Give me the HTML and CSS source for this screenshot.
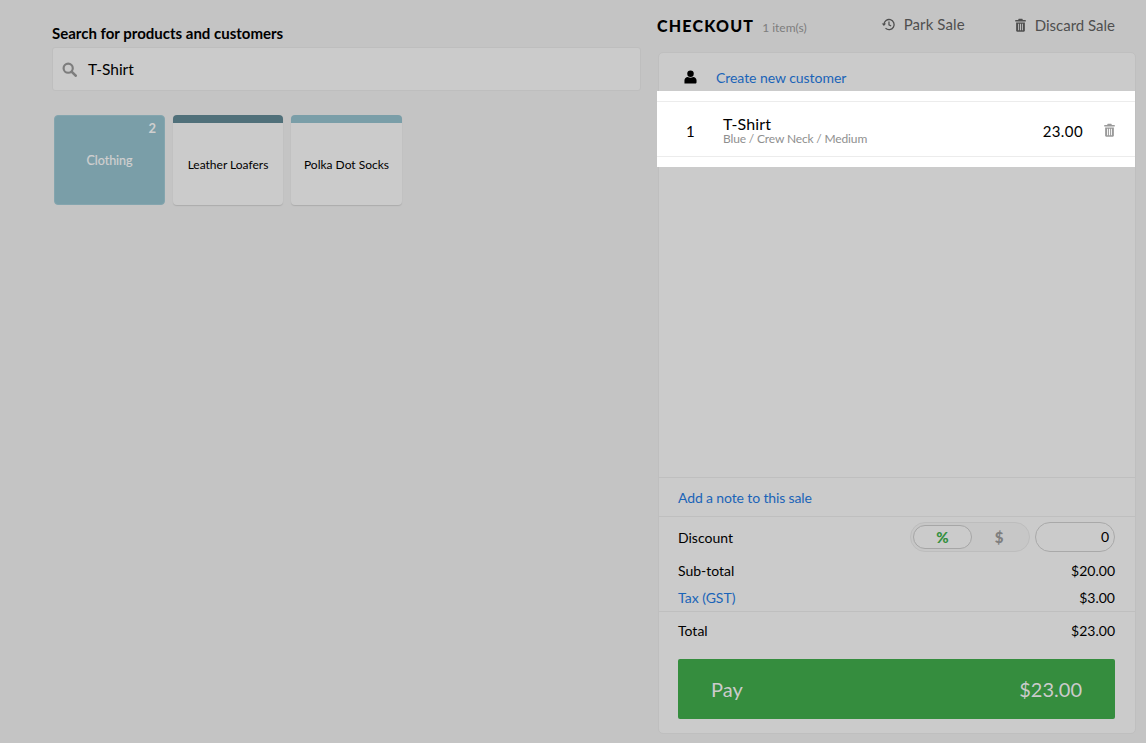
FILE: index.html
```html
<!DOCTYPE html>
<html lang="en">
<head>
<meta charset="utf-8">
<title>Checkout</title>
<link rel="stylesheet" href="styles.css">
</head>
<body>
<div class="page">
  <main class="left">
    <h2 class="search-label">Search for products and customers</h2>
    <div class="search-box">
      <svg class="search-icon" viewBox="0 0 16 16" width="15" height="15"><circle cx="6.600" cy="6.600" r="4.900" fill="none" stroke="#7d7d7d" stroke-width="2.300"/><path d="M10.200 10.200L14.600 14.600" stroke="#7d7d7d" stroke-width="2.800" stroke-linecap="round"/></svg>
      <span class="search-text">T-Shirt</span>
    </div>
    <div class="tiles">
      <div class="tile tile-cat"><span class="tile-count">2</span><span class="tile-cat-name">Clothing</span></div>
      <div class="tile tile-product tile-dark"><span class="tile-name">Leather Loafers</span></div>
      <div class="tile tile-product tile-light"><span class="tile-name">Polka Dot Socks</span></div>
    </div>
  </main>
  <section class="right">
    <header class="head">
      <h1 class="title">CHECKOUT</h1>
      <span class="count">1 item(s)</span>
      <span class="action action-park">
        <svg viewBox="0 0 16 16" width="15" height="15"><path d="M3.200 8a5.400 5.400 0 1 1 1.600 3.900" fill="none" stroke="#4f4f4f" stroke-width="1.400"/><path d="M0.800 6.900h4.600L3.100 9.600z" fill="#4f4f4f"/><path d="M8.500 4.900v3.400l2.300 1.300" fill="none" stroke="#4f4f4f" stroke-width="1.300"/></svg>
        Park Sale
      </span>
      <span class="action action-discard">
        <svg viewBox="0 0 14 16" width="13" height="14"><path d="M5 0.800h4l.8 1.600H13v1.600H1V2.400h3.200zM2 5h10v9.400c0 .8-.5 1.300-1.200 1.300H3.200c-.7 0-1.200-.5-1.200-1.300zM4.300 6.500v7.500h1.100V6.500zM6.450 6.500v7.500h1.100V6.500zM8.600 6.500v7.500h1.100V6.500z" fill="#4f4f4f" fill-rule="evenodd"/></svg>
        Discard Sale
      </span>
    </header>
    <div class="panel">
      <div class="customer">
        <svg class="person" viewBox="0 0 14 14" width="13" height="14"><circle cx="7" cy="3.500" r="3.500" fill="#000"/><path d="M0.500 14V10.500C0.500 8.300 2.300 7.200 4 6.900C5.800 8 8.200 8 10 6.900C11.700 7.200 13.500 8.300 13.500 10.500V12.600C13.500 13.500 13 14 12 14z" fill="#000"/></svg>
        <a class="link customer-link">Create new customer</a>
      </div>
      <div class="cart">
        <div class="line">
          <span class="qty">1</span>
          <div class="item">
            <div class="item-name">T-Shirt</div>
            <div class="item-variant">Blue / Crew Neck / Medium</div>
          </div>
          <span class="price">23.00</span>
          <svg class="remove" viewBox="0 0 14 16" width="13" height="14"><path d="M5 0.800h4l.8 1.600H13v1.600H1V2.400h3.200zM2 5h10v9.400c0 .8-.5 1.300-1.200 1.300H3.200c-.7 0-1.200-.5-1.200-1.300zM4.300 6.500v7.500h1.100V6.500zM6.450 6.500v7.500h1.100V6.500zM8.600 6.500v7.500h1.100V6.500z" fill="#9a9a9a" fill-rule="evenodd"/></svg>
        </div>
      </div>
      <div class="spacer"></div>
      <div class="note"><a class="link note-link">Add a note to this sale</a></div>
      <div class="summary">
        <div class="row row-discount">
          <span>Discount</span>
          <div class="discount-controls">
            <div class="toggle">
              <span class="toggle-on">%</span>
              <span class="toggle-off">$</span>
            </div>
            <div class="discount-input">0</div>
          </div>
        </div>
        <div class="row row-sub"><span>Sub-total</span><span>$20.00</span></div>
        <div class="row row-tax"><a class="link">Tax (GST)</a><span>$3.00</span></div>
      </div>
      <div class="total">
        <div class="row"><span>Total</span><span>$23.00</span></div>
        <div class="pay"><span>Pay</span><span>$23.00</span></div>
      </div>
    </div>
  </section>
</div>
</body>
</html>
```
FILE: styles.css
```css
* { box-sizing: border-box; }
html, body { margin: 0; height: 100%; }
body {
  background: #c4c4c4;
  font-family: Lato, "Open Sans", sans-serif;
  color: #000;
  overflow: hidden;
}
.page {
  display: flex;
  height: 743px;
  padding-left: 52px;
}
.left { width: 589px; padding-top: 25px; }
.search-label {
  margin: 0;
  font-size: 15px;
  line-height: 17px;
  font-weight: 700;
}
.search-box {
  margin-top: 5px;
  height: 44px;
  display: flex;
  align-items: center;
  padding-left: 9px;
  background: #cbcbcb;
  border: 1px solid #bebebe;
  border-radius: 3px;
}
.search-text { margin-left: 11px; font-size: 15.500px; }
.tiles {
  display: flex;
  gap: 8px;
  margin-top: 24px;
  padding-left: 2px;
}
.tile {
  width: 111px;
  height: 90px;
  border-radius: 4px;
  font-size: 12px;
}
.tile-cat {
  position: relative;
  background: #7a9ea8;
  color: #cfcfcf;
  display: flex;
  align-items: center;
  justify-content: center;
  border: 1px solid #84a5ae;
  font-size: 12.500px;
}
.tile-cat-name { font-weight: 400; -webkit-text-stroke: 0.2px #cfcfcf; }
.tile-count {
  position: absolute;
  top: 4px;
  right: 8px;
  font-weight: 700;
  font-size: 13px;
}
.tile-product {
  background: #cbcbcb;
  border-top: 8px solid;
  box-shadow: 0 1px 1px #acacac;
  display: flex;
  align-items: center;
  justify-content: center;
}
.tile-dark { border-top-color: #50707a; width: 110px; }
.tile-light { border-top-color: #7a9ea8; }
.right { width: 478px; margin-left: 16px; }
.head {
  height: 52px;
  display: flex;
  align-items: baseline;
  padding-top: 15px;
}
.title {
  margin: 0;
  font-size: 16px;
  font-weight: 900;
  letter-spacing: 1.2px;
  line-height: 20px;
}
.count { margin-left: 8px; font-size: 12px; color: #7d7d7d; }
.action {
  font-size: 15px;
  color: #4f4f4f;
  display: inline-flex;
  align-items: center;
  gap: 8px;
}
.action-park { margin-left: 74px; letter-spacing: 0.1px; }
.action-discard { margin-left: 49px; }
.panel {
  height: 682px;
  margin: 0 -1px 0 1px;
  background: #cbcbcb;
  border: 1px solid #bfbfbf;
  border-radius: 5px;
  display: flex;
  flex-direction: column;
}
.link { color: #1a64b8; }
.customer {
  height: 38px;
  display: flex;
  align-items: center;
  padding: 10px 0 0 25px;
  font-size: 14px;
  line-height: 17px;
}
.customer-link { margin-left: 19px; letter-spacing: -0.05px; }
.cart {
  margin-left: -2px;
  height: 76px;
  padding: 10px 0;
  background: #fff;
}
.line {
  height: 56px;
  display: flex;
  align-items: center;
  border-top: 1px solid #ececec;
  border-bottom: 1px solid #ececec;
}
.qty { width: 66px; padding: 4px 0 0 29px; font-size: 15px; }
.item { flex: 1; padding-top: 3px; }
.item-name { font-size: 16px; line-height: 15px; letter-spacing: 0.1px; }
.item-variant { font-size: 12px; line-height: 15px; letter-spacing: -0.15px; color: #8f8f8f; }
.price { padding-top: 4px; font-size: 15px; letter-spacing: 0.4px; }
.remove { margin: 2px 19px 0 20px; }
.spacer { flex: 1; }
.note {
  height: 39px;
  padding: 11px 19px 0;
  font-size: 14px;
  line-height: 17px;
  border-top: 1px solid #bfbfbf;
}
.note-link { letter-spacing: -0.13px; }
.summary {
  height: 95px;
  padding: 0 20px 0 19px;
  font-size: 14px;
  border-top: 1px solid #bfbfbf;
}
.row {
  display: flex;
  justify-content: space-between;
  align-items: center;
}
.row-discount { height: 40px; }
.discount-controls { display: flex; gap: 5px; align-items: center; }
.toggle {
  width: 120px;
  height: 30px;
  padding: 3px 3px 3px 2px;
  display: flex;
  align-items: center;
  background: #c7c7c7;
  border: 1px solid #bdbdbd;
  border-radius: 15px;
  font-size: 15px;
  font-weight: 900;
}
.toggle-on {
  width: 59px;
  height: 24px;
  line-height: 22px;
  text-align: center;
  color: #359040;
  background: #cbcbcb;
  border: 1px solid #a6a6a6;
  border-radius: 12px;
}
.toggle-off {
  flex: 1;
  text-align: center;
  color: #7f7f7f;
}
.discount-input {
  width: 80px;
  height: 30px;
  padding-right: 5px;
  line-height: 28px;
  text-align: right;
  border: 1px solid #a9a9a9;
  border-radius: 15px;
}
.row-sub { height: 24px; margin-top: 1px; }
.row-tax { height: 27px; padding-top: 3px; }
.total {
  height: 122px;
  padding: 0 20px 0 19px;
  font-size: 14px;
  border-top: 1px solid #bfbfbf;
}
.total .row { height: 37px; }
.pay {
  margin-top: 10px;
  height: 60px;
  padding: 0 33px;
  display: flex;
  justify-content: space-between;
  align-items: center;
  background: #358d3e;
  border-radius: 2px;
  color: #cbcbcb;
  font-size: 20px;
}
```
